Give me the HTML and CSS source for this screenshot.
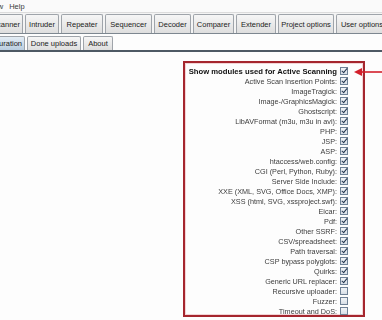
FILE: index.html
```html
<!DOCTYPE html>
<html lang="en">
<head>
    <meta charset="UTF-8">
    <meta name="viewport" content="width=device-width, initial-scale=1.0">
    <title>Upload Scanner options</title>
    <link rel="stylesheet" href="styles.css">
</head>
<body>

    <div class="menubar">
        <span class="menu-item">View</span>
        <span class="menu-item">Help</span>
    </div>

    <div class="tabs main-tabs">
        <div class="tab first" style="width: 23px">Scanner</div>
        <div class="tab" style="width: 34px">Intruder</div>
        <div class="tab" style="width: 42px">Repeater</div>
        <div class="tab" style="width: 47px">Sequencer</div>
        <div class="tab" style="width: 37px">Decoder</div>
        <div class="tab" style="width: 41px">Comparer</div>
        <div class="tab" style="width: 40px">Extender</div>
        <div class="tab" style="width: 56px">Project options</div>
        <div class="tab" style="width: 52px">User options</div>
        <div class="tab" style="width: 20px">Alerts</div>
    </div>

    <div class="tabs sub-tabs">
        <div class="tab first selected" style="width: 25px">Configuration</div>
        <div class="tab" style="width: 54px">Done uploads</div>
        <div class="tab" style="width: 30px">About</div>
    </div>

    <div class="content">
        <div class="modules" id="modules"></div>
        <div class="arrow">
            <svg width="30" height="10" viewBox="0 0 30 10">
                <line x1="6" y1="5" x2="30" y2="5" stroke="#d3202b" stroke-width="1.6"/>
                <polygon points="0,5 8,1 8,9" fill="#d3202b"/>
            </svg>
        </div>
    </div>

    <script>
        const modules = [
            ['Active Scan Insertion Points', true],
            ['ImageTragick', true],
            ['Image-/GraphicsMagick', true],
            ['Ghostscript', true],
            ['LibAVFormat (m3u, m3u in avi)', true],
            ['PHP', true],
            ['JSP', true],
            ['ASP', true],
            ['htaccess/web.config', true],
            ['CGI (Perl, Python, Ruby)', true],
            ['Server Side Include', true],
            ['XXE (XML, SVG, Office Docs, XMP)', true],
            ['XSS (html, SVG, xssproject.swf)', true],
            ['Eicar', true],
            ['Pdf', true],
            ['Other SSRF', true],
            ['CSV/spreadsheet', true],
            ['Path traversal', true],
            ['CSP bypass polyglots', true],
            ['Quirks', true],
            ['Generic URL replacer', true],
            ['Recursive uploader', false],
            ['Fuzzer', false],
            ['Timeout and DoS', false]
        ];

        let html = '<div class="row title"><span>Show modules used for Active Scanning</span><span class="check on"></span></div>';
        for (let [name, on] of modules) {
            html += `<div class="row"><span>${name}:</span><span class="check${on ? ' on' : ''}"></span></div>`;
        }
        document.getElementById('modules').innerHTML = html;
    </script>
</body>
</html>
```

FILE: styles.css
```css
body {
    font-family: 'Liberation Sans', Arial, sans-serif;
    font-size: 7.5px;
    color: #3c3c3c;
    background: #fdfdfd;
    margin: 0;
    overflow: hidden;
}

.menubar {
    display: flex;
    gap: 6px;
    height: 12px;
    align-items: center;
    margin-left: -13px;
    background: #fafafa;
    border-bottom: 1px solid #dcdcdc;
}

.tabs {
    display: flex;
    overflow: hidden;
    white-space: nowrap;
}

.main-tabs {
    height: 19px;
    padding-top: 1px;
    gap: 2px;
    border-bottom: 1px solid #7d8790;
    background: #f4f4f4;
}

.sub-tabs {
    height: 14px;
    margin-top: 2px;
    gap: 2px;
    border-bottom: 2px solid #4e5964;
}

.tab {
    flex-shrink: 0;
    display: flex;
    align-items: center;
    justify-content: center;
    overflow: hidden;
    padding: 0 2px;
    box-sizing: border-box;
    border: 1px solid #9fa4aa;
    border-bottom: none;
    border-radius: 2px 2px 0 0;
    background: linear-gradient(#f6f6f6, #dedede);
    color: #222;
}

.tab.first {
    justify-content: flex-end;
    border-left: none;
    border-radius: 0 2px 0 0;
}

.tab.selected {
    background: linear-gradient(#e4edf5, #b9cddf);
}

.content {
    position: relative;
    padding-top: 9px;
}

.modules {
    box-sizing: border-box;
    margin-left: 183px;
    width: 182px;
    height: 256px;
    border: 2px solid #a5262e;
    box-shadow: inset 0 0 0 1px #f3d4d6;
    padding: 3px 15px 0 0;
    display: flex;
    flex-direction: column;
    align-items: flex-end;
    font-size: 7.25px;
    will-change: transform;
}

.row {
    display: flex;
    align-items: center;
    gap: 3px;
    height: 10px;
    flex-shrink: 0;
}

.row.title {
    font-weight: bold;
    font-size: 7.7px;
    color: #111;
}

.check {
    width: 6px;
    height: 6px;
    border: 1px solid #6f8196;
    background: linear-gradient(#f2f5f8, #d7dee6);
    position: relative;
}

.check.on::after {
    content: '';
    position: absolute;
    left: 2px;
    top: -1px;
    width: 2px;
    height: 5px;
    border: solid #24364f;
    border-width: 0 1.5px 1.5px 0;
    transform: rotate(40deg);
}

.arrow {
    position: absolute;
    left: 354px;
    top: 15px;
    line-height: 0;
}
```
